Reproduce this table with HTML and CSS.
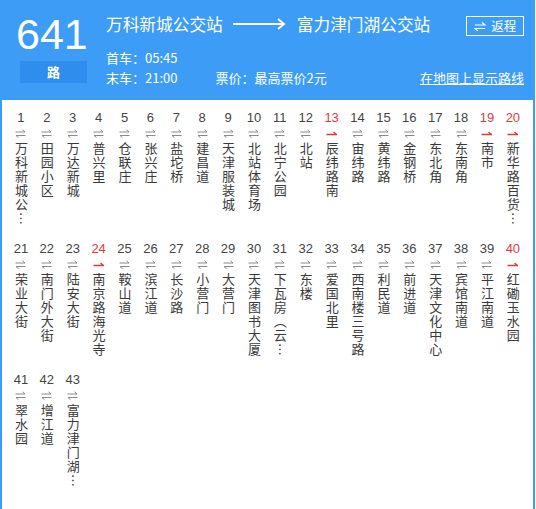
FILE: index.html
```html
<!DOCTYPE html>
<html lang="zh">
<head>
<meta charset="utf-8">
<link rel="stylesheet" href="styles.css">
</head>
<body>
<div class="frame">
  <header class="head">
    <div class="badge">
      <div class="num">641</div>
      <div class="lu">路</div>
    </div>
    <div class="info">
      <div class="title">
        <span>万科新城公交站</span>
        <svg class="long-arrow" width="53" height="12" viewBox="0 0 53 12"><path d="M0 6H51M45 1L51 6L45 11" fill="none" stroke="#fff" stroke-width="2"/></svg>
        <span>富力津门湖公交站</span>
        <span class="back"><svg width="12" height="9" viewBox="0 0 12 9"><path d="M1 3H11L8 0.5M11 6.5H1L4 9" fill="none" stroke="#fff" stroke-width="1.2"/></svg>返程</span>
      </div>
      <div class="meta first">首车：05:45</div>
      <div class="meta row">
        <span>末车：21:00</span>
        <span class="price">票价：最高票价2元</span>
        <a class="map">在地图上显示路线</a>
      </div>
    </div>
  </header>
  <main class="stations" id="stations"></main>
</div>
<script src="app.js"></script>
</body>
</html>
```
FILE: app.js
```js
const names = ["万科新城公…","田园小区","万达新城","普兴里","仓联庄","张兴庄","盐坨桥","建昌道","天津服装城","北站体育场","北宁公园","北站","辰纬路南","宙纬路","黄纬路","金钢桥","东北角","东南角","南市","新华路百货…","荣业大街","南门外大街","陆安大街","南京路海光寺","鞍山道","滨江道","长沙路","小营门","大营门","天津图书大厦","下瓦房（云…","东楼","爱国北里","西南楼三号路","利民道","前进道","天津文化中心","宾馆南道","平江南道","红磡玉水园","翠水园","增江道","富力津门湖…"];
const oneway = [13,19,20,24,40];
const wrap = document.getElementById('stations');
const both = '<svg width="11" height="9" viewBox="0 0 11 9"><path d="M0.5 3H10L7.5 0.8M10.5 6.5H1L3.5 8.7" fill="none" stroke="#8a8a8a" stroke-width="1"/></svg>';
const one = '<svg width="11" height="9" viewBox="0 0 11 9"><path d="M0.5 5.5H10.5L7.5 3" fill="none" stroke="#e2393b" stroke-width="1.3"/></svg>';
names.forEach((n, i) => {
  const k = i + 1;
  const red = oneway.includes(k);
  const d = document.createElement('div');
  d.className = 'st' + (red ? ' red' : '');
  d.innerHTML = '<div class="no">' + k + '</div><div class="ic">' + (red ? one : both) + '</div><div class="nm">' + n + '</div>';
  wrap.appendChild(d);
});
```
FILE: styles.css
```css
* { box-sizing: border-box; }
html, body { margin: 0; padding: 0; background: #fff; }
body { font-family: "Noto Sans CJK SC", "Liberation Sans", sans-serif; }
.frame {
  width: 535px;
  height: 509px;
  border-left: 2px solid #3d9cf6;
  border-right: 2px solid #3d9cf6;
  overflow: hidden;
}
.head {
  height: 100px;
  background: #3d9cf6;
  color: #fff;
  display: flex;
  margin: 0 -2px;
}
.badge { width: 106px; padding: 9px 0 0 18px; }
.num {
  font-family: "Liberation Sans", sans-serif;
  font-size: 43px;
  line-height: 50px;
  margin-left: -2px;
}
.lu {
  width: 67px;
  height: 22px;
  margin-top: 2px;
  margin-left: 2px;
  background: #2f8dee;
  text-align: center;
  font-size: 13px;
  line-height: 22px;
  font-weight: bold;
}
.info { flex: 1; padding-top: 11px; }
.title {
  display: flex;
  align-items: center;
  font-size: 16.7px;
  line-height: 26px;
  height: 26px;
}
.long-arrow { margin: 0 11px 0 10px; }
.back {
  margin-left: 36px;
  margin-top: 4px;
  border: 1px solid #fff;
  height: 20px;
  width: 58px;
  font-size: 12.5px;
  line-height: 18px;
  display: flex;
  align-items: center;
  justify-content: center;
  gap: 5px;
}
.meta { font-size: 13px; line-height: 20px; }
.meta.first { margin-top: 11px; }
.row { display: flex; }
.price { margin-left: 38px; }
.map { margin-left: auto; margin-right: 11px; text-decoration: underline; color: #fff; }
.stations {
  display: grid;
  grid-template-columns: repeat(20, 25.9px);
  grid-auto-rows: 131px;
  padding-left: 6px;
}
.st { display: flex; flex-direction: column; align-items: center; padding-top: 10px; color: #444; }
.no { font-family: "Liberation Sans", sans-serif; font-size: 13px; line-height: 16px; }
.red .no { color: #e2393b; }
.ic { height: 9px; margin-top: 3px; display: flex; }
.ic svg { display: block; }
.nm {
  margin-top: 4px;
  writing-mode: vertical-rl;
  font-size: 13px;
  line-height: 14px;
  letter-spacing: 1px;
  color: #3a3a3a;
}
```
